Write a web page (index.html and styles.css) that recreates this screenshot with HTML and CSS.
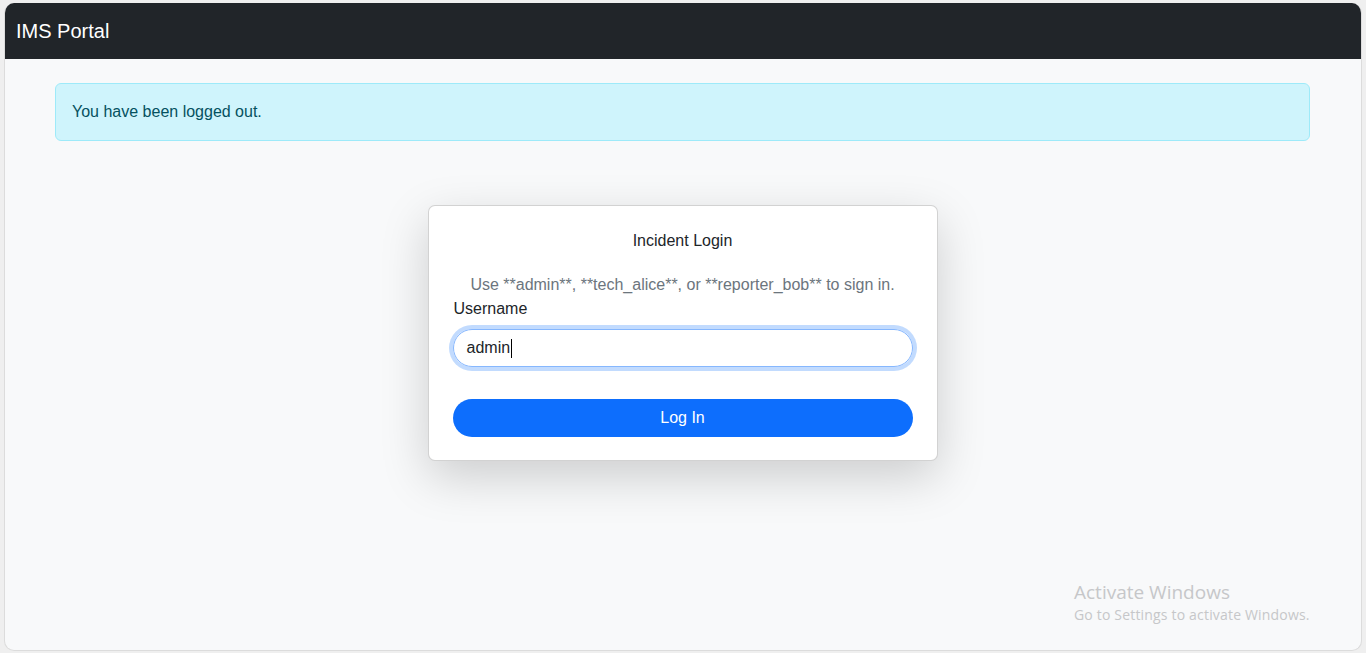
FILE: index.html
```html
<!DOCTYPE html>
<html lang="en">
<head>
<meta charset="utf-8">
<title>IMS Portal</title>
<link rel="stylesheet" href="styles.css">
</head>
<body>
<div class="window">
  <nav class="navbar"><span class="brand">IMS Portal</span></nav>
  <main class="content">
    <div class="alert">You have been logged out.</div>
    <div class="card">
      <h1 class="card-title">Incident Login</h1>
      <p class="hint">Use **admin**, **tech_alice**, or **reporter_bob** to sign in.</p>
      <form class="form">
        <label class="label" for="username">Username</label>
        <div class="input"><span>admin</span><span class="caret"></span></div>
        <button type="button" class="btn">Log In</button>
      </form>
    </div>
  </main>
  <div class="watermark">
    <div class="wm-title">Activate Windows</div>
    <div class="wm-sub">Go to Settings to activate Windows.</div>
  </div>
</div>
</body>
</html>
```

FILE: styles.css
```css
* { box-sizing: border-box; }
html, body { margin: 0; height: 100%; }
body {
  background: #efefef;
  padding: 3px 4px 2px 4px;
  font-family: "Liberation Sans", Arial, sans-serif;
  color: #212529;
}
.window {
  position: relative;
  height: 648px;
  background: #f8f9fa;
  border: 1px solid #dcdcdc;
  border-top: none;
  border-radius: 10px;
  overflow: hidden;
}
.navbar {
  height: 56px;
  background: #212529;
  display: flex;
  align-items: center;
  padding-left: 11px;
}
.brand {
  color: #fff;
  font-size: 20px;
}
.content {
  display: flex;
  flex-direction: column;
  align-items: center;
  padding: 24px 51px 0 50px;
}
.alert {
  align-self: stretch;
  height: 58px;
  background: #cff4fc;
  border: 1px solid #9eeaf9;
  border-radius: 6px;
  color: #055160;
  font-size: 16px;
  display: flex;
  align-items: center;
  padding-left: 16px;
}
.card {
  margin-top: 64px;
  width: 510px;
  background: #fff;
  border: 1px solid rgba(0,0,0,.175);
  border-radius: 7px;
  box-shadow: 0 1rem 3rem rgba(0,0,0,.175);
  padding: 25px 24px 23px 24px;
}
.card-title {
  margin: 0;
  font-size: 16px;
  font-weight: normal;
  line-height: 20px;
  text-align: center;
}
.hint {
  margin: 24px 0 0 0;
  font-size: 16px;
  line-height: 19px;
  color: #6c757d;
  text-align: center;
}
.form { display: flex; flex-direction: column; }
.label {
  margin-top: 5px;
  font-size: 16px;
  line-height: 20px;
  padding-left: 1px;
}
.input {
  margin-top: 10px;
  height: 38px;
  border: 1px solid #86b7fe;
  border-radius: 19px;
  box-shadow: 0 0 0 4px rgba(13,110,253,.25);
  display: flex;
  align-items: center;
  padding-left: 13px;
  font-size: 16px;
  color: #212529;
}
.caret {
  display: inline-block;
  width: 1px;
  height: 19px;
  background: #000;
  margin-left: 1px;
}
.btn {
  margin-top: 32px;
  height: 38px;
  border: none;
  border-radius: 19px;
  background: #0d6efd;
  color: #fff;
  font-family: "Liberation Sans", Arial, sans-serif;
  font-size: 16px;
}
.watermark {
  position: absolute;
  left: 1069px;
  top: 576px;
  color: #c6c7c9;
  font-family: "Open Sans", "Noto Sans", sans-serif;
}
.wm-title { font-size: 19px; line-height: 26px; }
.wm-sub { font-size: 14px; line-height: 19px; letter-spacing: 0.18px; }
```
